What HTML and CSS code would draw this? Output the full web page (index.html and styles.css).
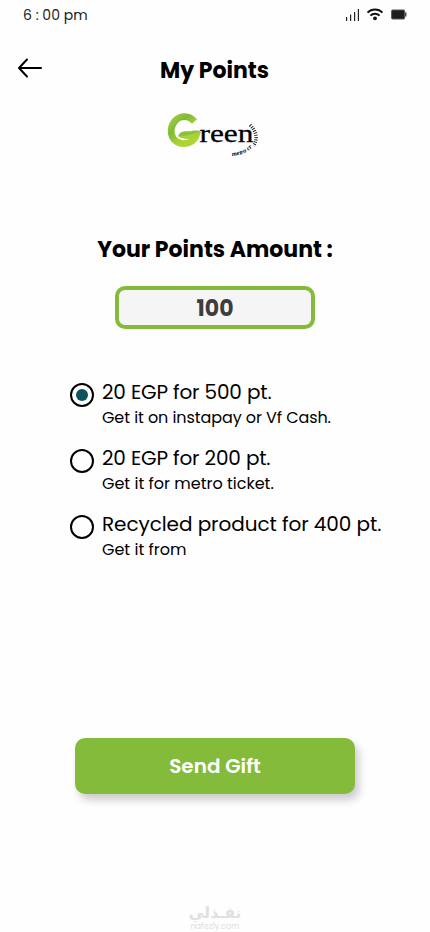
FILE: index.html
```html
<!DOCTYPE html>
<html lang="en">
<head>
<meta charset="utf-8">
<title>My Points</title>
<link rel="stylesheet" href="styles.css">
</head>
<body>
<main class="screen">
  <div class="status">
    <span class="time">6 : 00 pm</span>
    <svg class="status-icons" width="64" height="16" viewBox="0 0 64 16">
      <g stroke="#222" stroke-width="1.2"><path d="M2.600 11v4M6.600 8.500v6.500M10.600 6v9M14.400 3v12"/></g>
      <g fill="none" stroke="#111" stroke-width="1.900"><path d="M23.500 6.700a10.500 10.500 0 0 1 15 0M26.400 9.700a6.500 6.500 0 0 1 9.200 0"/></g>
      <circle cx="31" cy="12.300" r="1.900" fill="#111"/>
      <rect x="47.600" y="4" width="13" height="9" rx="1" fill="#1b1f1e" stroke="#555"/>
      <path d="M61.200 6.500h1.200v4h-1.200z" fill="#222"/>
    </svg>
  </div>
  <header class="header">
    <svg class="back" width="26" height="22" viewBox="0 0 26 22" fill="none" stroke="#000" stroke-width="2" stroke-linecap="round" stroke-linejoin="round"><path d="M24 11H2M10 2.500L2 11l8 8.500"/></svg>
    <h1 class="title">My Points</h1>
  </header>
  <svg class="logo" width="96" height="48" viewBox="0 0 96 48">
    <defs>
      <linearGradient id="leaf" x1="0" y1="0" x2="1" y2="1"><stop offset="0" stop-color="#a5cf3c"/><stop offset=".3" stop-color="#7fba3a"/><stop offset=".6" stop-color="#a9d034"/><stop offset="1" stop-color="#b5d733"/></linearGradient>
      <path id="arc" d="M64 43.800Q77 43.500 85 34.500"/>
    </defs>
    <path d="M26.500 9.500C21 3 12 3 7 9C1 16 2.500 25.500 8.500 29.500C16 34 27 31 29 21" fill="none" stroke="url(#leaf)" stroke-width="6.800"/>
    <path d="M10 24C13 17 19 20 24 19C28 18.200 31 18.500 33 20C30 26 17 29 10 24Z" fill="#8cc23a"/>
    <path d="M10 24C17 25 25 21 33 20C30 27 17 29 10 24Z" fill="#a9d138"/>
    <text class="logo-word" x="31.500" y="30" textLength="54" lengthAdjust="spacingAndGlyphs">reen</text>
    <text class="logo-sub"><textPath href="#arc">metro cr</textPath></text>
    <path d="M82 13Q92 23 85.500 34" fill="none" stroke="#222" stroke-width="3.500" stroke-dasharray="1 1.300"/>
  </svg>
  <section class="amount">
    <h2 class="amount-label">Your Points Amount :</h2>
    <div class="amount-box"><span class="amount-value">100</span></div>
  </section>
  <section class="options">
    <div class="option">
      <span class="radio checked"></span>
      <div class="option-text"><p class="name">20 EGP for 500 pt.</p><p class="detail tight">Get it on instapay or Vf Cash.</p></div>
    </div>
    <div class="option">
      <span class="radio"></span>
      <div class="option-text"><p class="name">20 EGP for 200 pt.</p><p class="detail">Get it for metro ticket.</p></div>
    </div>
    <div class="option">
      <span class="radio"></span>
      <div class="option-text"><p class="name long">Recycled product for 400 pt.</p><p class="detail">Get it from</p></div>
    </div>
  </section>
  <button class="send"><span>Send Gift</span></button>
  <footer class="mark"><span class="mark-ar" lang="ar">نفـذلي</span><span class="mark-en">nafezly.com</span></footer>
</main>
</body>
</html>
```
FILE: styles.css
```css
* { box-sizing: border-box; margin: 0; padding: 0; }
body { background: #fefefe; color: #000; font-family: Poppins, Inter, sans-serif; }
.screen { width: 430px; height: 932px; overflow: hidden; display: flex; flex-direction: column; align-items: center; }
.status { width: 100%; height: 30px; padding: 0 22px 0 23px; display: flex; align-items: center; justify-content: space-between; flex: none; }
.time { font-size: 14px; line-height: 30px; color: #222; }
.status-icons { margin-top: -3px; }
.header { width: 100%; height: 80px; padding: 0 17px; display: grid; grid-template-columns: 26px 1fr 26px; align-items: center; flex: none; }
.back { margin-top: -4px; }
.title { text-align: center; font-size: 22px; line-height: 32px; font-weight: 700; padding-top: 2px; margin-left: -1px; }
.logo { display: block; margin: 2px 0 0 1px; flex: none; overflow: visible; }
.logo-word { font: 26px "Liberation Serif", serif; stroke: #000; stroke-width: .3px; }
.logo-sub { font: italic 700 6.5px "Liberation Serif", serif; }
.amount { margin-top: 74px; display: flex; flex-direction: column; align-items: center; }
.amount-label { font-size: 22px; line-height: 32px; font-weight: 700; white-space: nowrap; }
.amount-box { width: 200px; height: 43px; margin-top: 20px; border: 4px solid #84bb3b; border-radius: 10px; background: #f5f5f5; display: flex; align-items: center; justify-content: center; }
.amount-value { font-size: 22px; font-weight: 700; color: #3d3d3d; padding-top: 2px; }
.options { width: 100%; padding-left: 70px; margin-top: 49px; }
.option { height: 66px; display: flex; gap: 8px; }
.radio { width: 24px; height: 24px; margin-top: 5px; border: 2px solid #000; border-radius: 50%; display: flex; align-items: center; justify-content: center; flex: none; }
.checked::after { content: ""; width: 12px; height: 12px; border-radius: 50%; background: #0d5260; }
.option-text { white-space: nowrap; }
.name { font-size: 20px; line-height: 28px; letter-spacing: -.16px; }
.long { letter-spacing: -.07px; }
.detail { font-size: 16px; line-height: 24px; }
.tight { letter-spacing: -.08px; }
.send { width: 280px; height: 56px; margin-top: 162px; border: 0; border-radius: 10px; background: #84bb3b; color: #fff; font: 600 20px Poppins, Inter, sans-serif; box-shadow: 4px 6px 8px rgba(0,0,0,.2); flex: none; }
.mark { margin-top: 110px; display: flex; flex-direction: column; align-items: center; color: #e0e0e0; }
.mark-ar { font: 700 15.5px/18px "DejaVu Sans", sans-serif; }
.mark-en { font-size: 8px; line-height: 10px; letter-spacing: .1px; }
```
